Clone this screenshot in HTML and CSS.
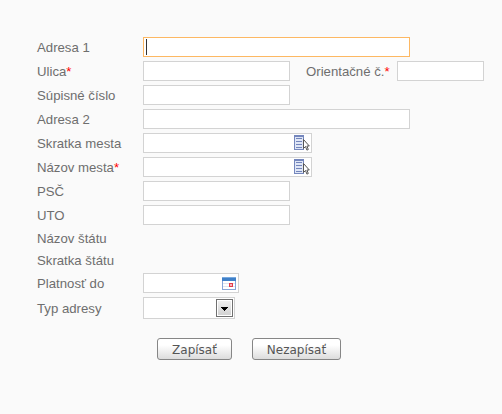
FILE: index.html
```
<!DOCTYPE html>
<html lang="sk">
<head>
    <meta charset="utf-8">
    <title>Adresa</title>
    <link rel="stylesheet" href="styles.css">
</head>
<body>
    <svg width="0" height="0" class="defs">
        <symbol id="pick" viewBox="0 0 16 16">
            <rect x="0.5" y="0.5" width="9" height="14" fill="#dfe6f6" stroke="#7587bd"/>
            <path d="M0 1.5h10" stroke="#7587bd"/>
            <path d="M2 3.5h6M2 6.5h6M2 9.5h6M2 12.5h6" stroke="#7385bb"/>
            <path d="M9.5 4.5v9l2-2 1.4 3.6 1.4-.6-1.4-3.5h2.4z" fill="#fff" stroke="#555"/>
        </symbol>
    </svg>

    <form class="address">
        <div class="row">
            <label for="adresa1">Adresa 1</label>
            <div class="field wide focused"><input type="text" id="adresa1"><span class="caret"></span></div>
        </div>
        <div class="row">
            <label for="ulica">Ulica<span class="req">*</span></label>
            <div class="field medium"><input type="text" id="ulica"></div>
            <label for="cislo" class="second">Orientačné č.<span class="req">*</span></label>
            <div class="field small"><input type="text" id="cislo"></div>
        </div>
        <div class="row">
            <label for="supisne">Súpisné číslo</label>
            <div class="field medium"><input type="text" id="supisne"></div>
        </div>
        <div class="row">
            <label for="adresa2">Adresa 2</label>
            <div class="field wide"><input type="text" id="adresa2"></div>
        </div>
        <div class="row">
            <label for="skratka">Skratka mesta</label>
            <div class="field lookup"><input type="text" id="skratka"><svg class="pick-icon"><use href="#pick"/></svg></div>
        </div>
        <div class="row">
            <label for="mesto">Názov mesta<span class="req">*</span></label>
            <div class="field lookup"><input type="text" id="mesto"><svg class="pick-icon"><use href="#pick"/></svg></div>
        </div>
        <div class="row">
            <label for="psc">PSČ</label>
            <div class="field medium"><input type="text" id="psc"></div>
        </div>
        <div class="row">
            <label for="uto">UTO</label>
            <div class="field medium"><input type="text" id="uto"></div>
        </div>
        <div class="row static">
            <label>Názov štátu</label>
        </div>
        <div class="row static">
            <label>Skratka štátu</label>
        </div>
        <div class="row">
            <label for="platnost">Platnosť do</label>
            <div class="field date">
                <input type="text" id="platnost">
                <svg class="date-icon" viewBox="0 0 14 13">
                    <rect x="0.5" y="0.5" width="13" height="12" fill="#fff" stroke="#86a5d8"/>
                    <rect width="14" height="4" fill="#3f80c8"/>
                    <path d="M0 .5h14" stroke="#78a9df"/>
                    <path d="M1 6.5h12M1 9.5h12" stroke="#dde5f1"/>
                    <rect x="7.5" y="6.5" width="3" height="3" fill="#f7b5bb" stroke="#e23b4b"/>
                </svg>
            </div>
        </div>
        <div class="row select-row">
            <label>Typ adresy</label>
            <div class="field select">
                <button type="button" class="arrow" aria-label="Typ adresy">
                    <svg width="7" height="4" viewBox="0 0 7 4"><path d="M0 0h7v1H6v1H5v1H4v1H3V3H2V2H1V1H0z"/></svg>
                </button>
            </div>
        </div>
        <div class="buttons">
            <button type="button" class="btn save">Zapísať</button>
            <button type="button" class="btn cancel">Nezapísať</button>
        </div>
    </form>
</body>
</html>
```

FILE: styles.css
```
body {
    margin: 0;
    padding: 35px 0 0 37px;
    background: #fafafa;
    font-family: "Liberation Sans", Arial, sans-serif;
    font-size: 13.2px;
    color: #6e6e6e;
}
.defs {
    display: none;
}
.row {
    display: flex;
    align-items: center;
    height: 24px;
}
.static {
    height: 22px;
}
.select-row {
    height: 26px;
}
label {
    width: 106px;
    padding-top: 2px;
    line-height: 16px;
    white-space: nowrap;
}
.second {
    width: 91px;
    margin-left: 16px;
}
.req {
    color: #ff0000;
}
.field {
    box-sizing: border-box;
    display: flex;
    align-items: center;
    position: relative;
    height: 20px;
    border: 1px solid #d3d3d3;
    background: #fff;
}
.field input {
    flex: 1;
    min-width: 0;
    height: 16px;
    padding: 0 2px;
    border: 0;
    outline: none;
    background: transparent;
    font: inherit;
}
.wide {
    width: 267px;
}
.medium {
    width: 147px;
}
.small {
    width: 87px;
}
.lookup {
    width: 169px;
}
.date {
    width: 96px;
}
.select {
    width: 92px;
    height: 22px;
    justify-content: flex-end;
}
.focused {
    border-color: #fdb863;
}
.caret {
    position: absolute;
    left: 2px;
    top: 1px;
    width: 1px;
    height: 16px;
    background: #333;
}
.pick-icon {
    width: 16px;
    height: 16px;
    margin-right: 1px;
}
.date-icon {
    width: 14px;
    height: 13px;
    margin: 1px 2px 0 0;
}
.arrow {
    display: flex;
    align-items: center;
    justify-content: center;
    width: 17px;
    height: 18px;
    margin-right: 1px;
    padding: 2px 0 0;
    border: 1px solid #707070;
    background: linear-gradient(#f2f2f2, #cfcfcf);
    box-shadow: inset 0 0 0 1px #fff;
}
.buttons {
    display: flex;
    gap: 20px;
    margin: 17px 0 0 120px;
}
.btn {
    height: 22px;
    padding: 1px 0 0;
    border: 1px solid #868686;
    border-radius: 3px;
    background: linear-gradient(#fff 30%, #dcdcdc);
    font-family: "DejaVu Sans", Tahoma, sans-serif;
    font-size: 12px;
    color: #555;
}
.save {
    width: 75px;
}
.cancel {
    width: 89px;
}
```
